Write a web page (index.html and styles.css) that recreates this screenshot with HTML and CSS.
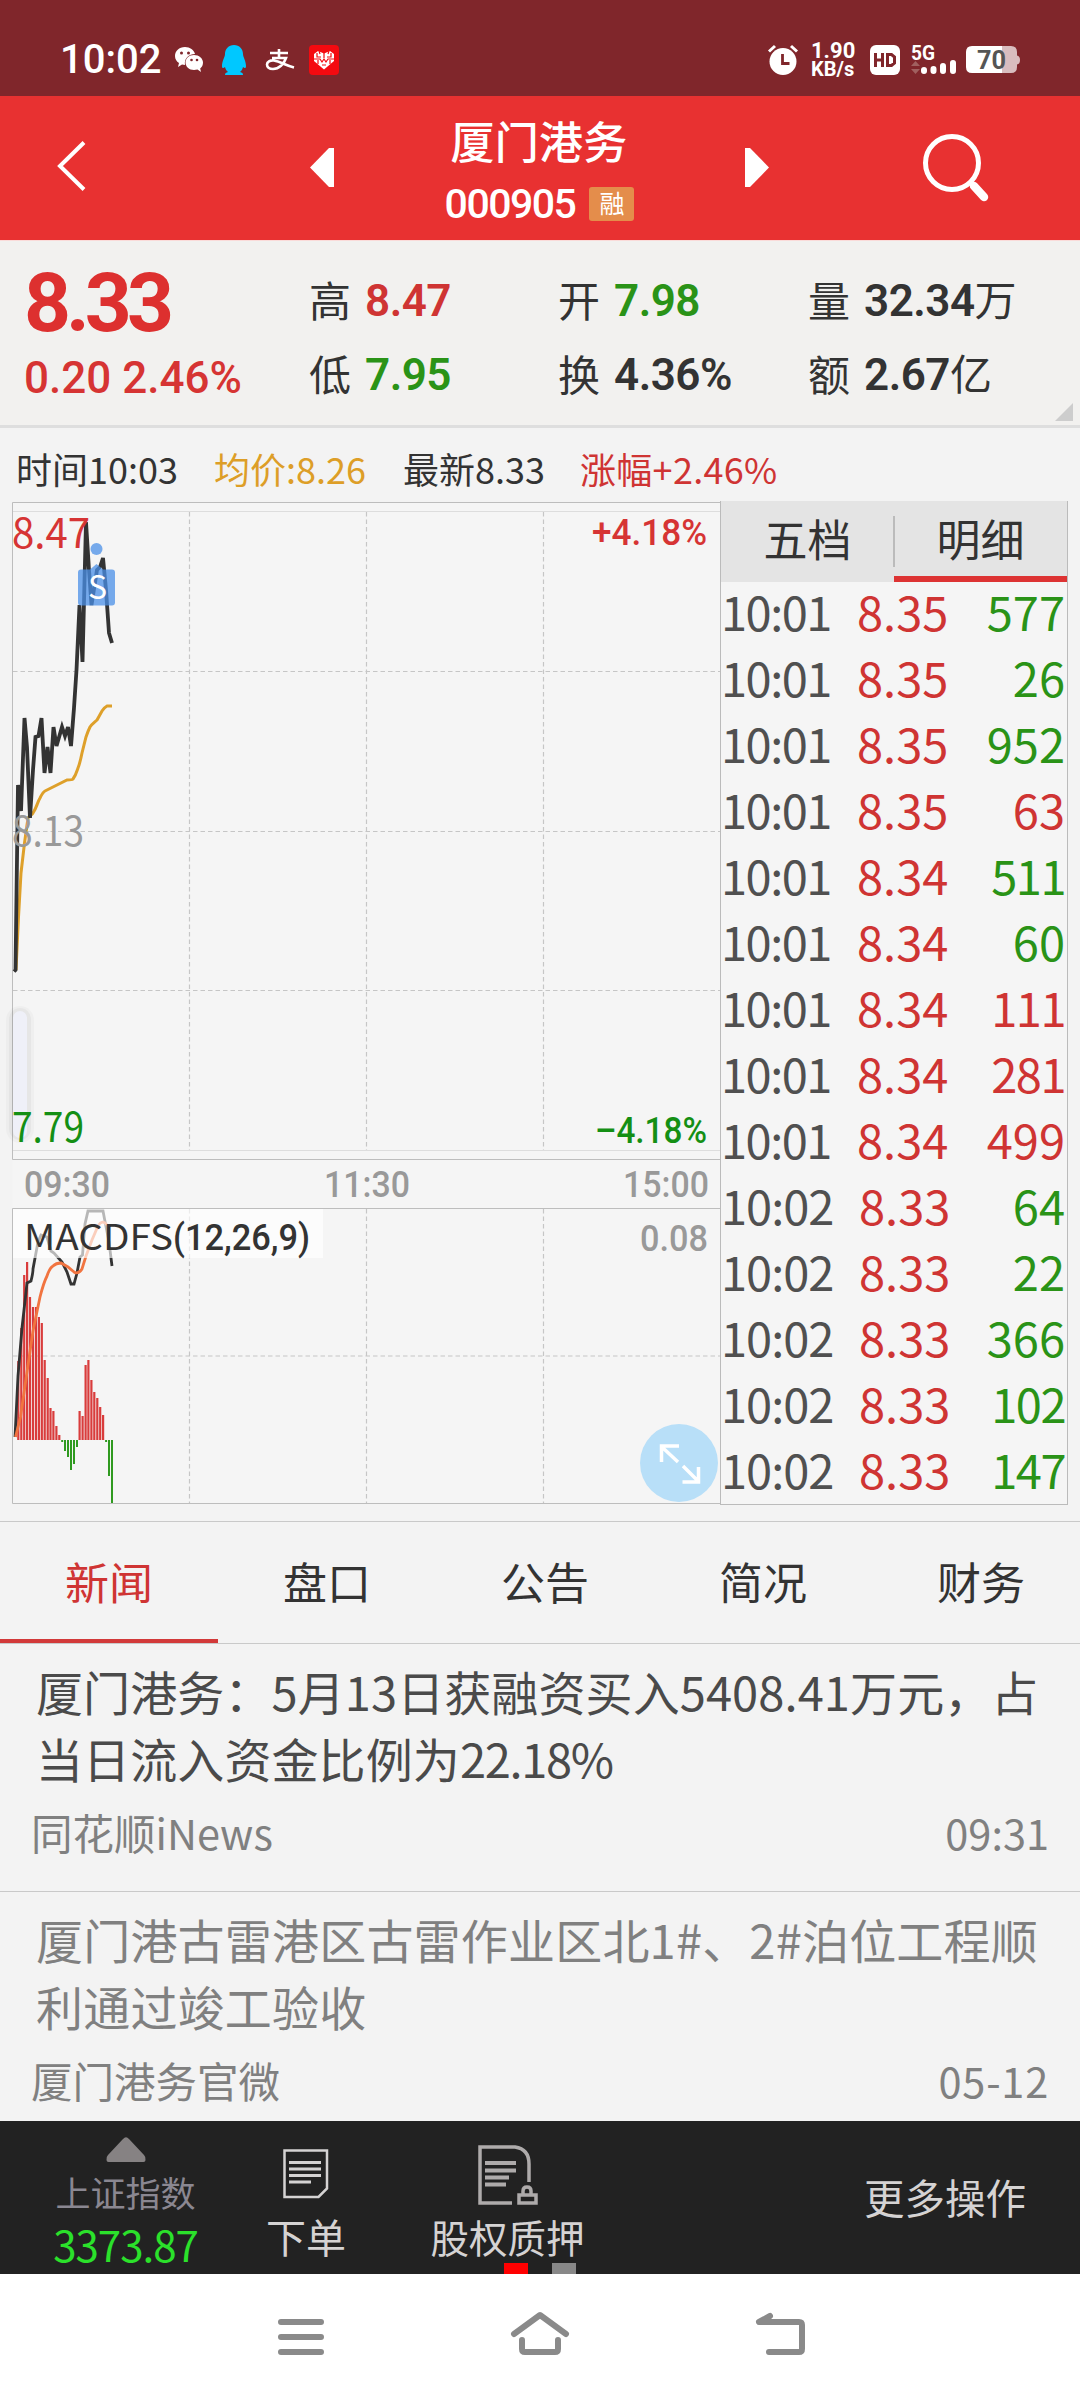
FILE: index.html
```html
<!DOCTYPE html>
<html lang="zh-CN">

<head>
	<meta charset="utf-8">
	<meta name="viewport" content="width=device-width, initial-scale=1.0">
	<title>厦门港务 000905</title>
	<link rel="stylesheet" href="styles.css">
</head>

<body>
	<div class="statusbar">
		<div class="status-left">
			<span class="clock">10:02</span>
			<svg class="ic-wechat" width="28" height="26" viewBox="0 0 28 26">
				<path fill="#fff" d="M10 0C4 0 0 4 0 9c0 3 1.500 5.500 4 7l-1 4 4-2.500 3 .5C9 11 14 7 20 7 19 3 15 0 10 0z" />
				<path fill="#fff" d="M19 8c-5 0-8.500 3.500-8.500 7.500S14 23 19 23l3.500-.5L26 25l-.8-3.500C27 20 28 18 28 15.500 28 11.500 24 8 19 8z" />
				<circle cx="6.500" cy="6" r="1.500" fill="#80262b" />
				<circle cx="13.500" cy="6" r="1.500" fill="#80262b" />
				<circle cx="16.500" cy="13" r="1.300" fill="#80262b" />
				<circle cx="22" cy="13" r="1.300" fill="#80262b" />
			</svg>
			<svg class="ic-qq" width="24" height="30" viewBox="0 0 24 30">
				<path fill="#00c8ff" d="M12 0C6.500 0 3 4 3 9c0 3-3 7-3 12 0 2 1 3 3 1 .5 2 1.500 4 3 5-2 .5-3 1-3 3h18c0-2-1-2.500-3-3 1.500-1 2.500-3 3-5 2 2 3 1 3-1 0-5-3-9-3-12 0-5-3.500-9-9-9z" />
			</svg>
			<svg class="ic-zhi" width="29" height="22" viewBox="0 0 29 22">
				<path fill="none" stroke="#fff" stroke-width="2.600" d="M4 4h18M13 0v9M6 9h14c-2 6-7 11-13 11-4 0-6-2-6-4.500S4 11 8 11.500c6 1 12 5 20 7" />
			</svg>
			<svg class="ic-heart" width="30" height="30" viewBox="0 0 30 30">
				<rect width="30" height="30" rx="4" fill="#f40a10" />
				<path fill="#fff" d="M15 24.500 5 16V9l4-3 6 2.500L21 6l4 3v7z" />
				<path fill="none" stroke="#f40a10" stroke-width="1.200" d="M15 8v5M8 8v4h4M22 8v4h-4M5 14h6l2 3 2-3 2 3 2-3h6M9 15v4M21 15v4M13 20h4M10 6l1 3M20 6l-1 3" />
			</svg>
		</div>
		<div class="status-right">
			<svg class="ic-alarm" width="30" height="30" viewBox="0 0 30 30">
				<circle cx="15" cy="16.500" r="13.500" fill="#fff" />
				<path fill="none" stroke="#fff" stroke-width="3" d="M1 6.500 7 1M29 6.500 23 1" />
				<path fill="none" stroke="#80262b" stroke-width="2.800" d="M14.500 9v9.500h7" />
			</svg>
			<div class="speed"><span>1.90</span><span>KB/s</span></div>
			<svg class="ic-hd" width="30" height="30" viewBox="0 0 30 30">
				<rect width="30" height="30" rx="6" fill="#fff" />
				<path fill="none" stroke="#80262b" stroke-width="3" d="M5.500 8v14M12.500 8v14M5.500 15h7M17.500 9.500h4l3 2.500v6l-3 2.500h-4z" />
			</svg>
			<svg class="ic-signal" width="46" height="32" viewBox="0 0 46 32">
				<text x="0" y="16" class="net" textLength="24" lengthAdjust="spacingAndGlyphs">5G</text>
				<path fill="#a0605f" d="M0 22l4.500-5 4.500 5zM0 25h9l-4.500 5z" />
				<path stroke="#fff" stroke-width="6" stroke-linecap="round" d="M13 26v1M22.500 25v2M32 22v5M42 19v8" />
			</svg>
			<svg class="ic-battery" width="54" height="28" viewBox="0 0 54 28">
				<path fill="#d9bdbf" d="M34 0h11q6 0 6 6v3.500q3 .5 3 4.500t-3 4.500V21q0 6-6 6H34z" />
				<path fill="#fff" d="M36 0H6Q0 0 0 6v15q0 6 6 6h30z" />
				<text x="11" y="22.500" class="level" textLength="29" lengthAdjust="spacingAndGlyphs">70</text>
			</svg>
		</div>
	</div>

	<header class="topbar">
		<svg class="back" width="30" height="50" viewBox="0 0 30 50"><path fill="none" stroke="#fff" stroke-width="4" d="M27 1.500 3 25l24 23.500" /></svg>
		<svg class="prev" width="24" height="39" viewBox="0 0 24 39"><path fill="#fff" d="M24 0h-5L0 19.500 19 39h5z" /></svg>
		<div class="stock">
			<h1>厦门港务</h1>
			<div class="code"><span>000905</span><em>融</em></div>
		</div>
		<svg class="next" width="24" height="39" viewBox="0 0 24 39"><path fill="#fff" d="M0 0h5l19 19.500L5 39H0z" /></svg>
		<svg class="search" width="68" height="70" viewBox="0 0 68 70">
			<circle cx="29" cy="30" r="26.500" fill="none" stroke="#fff" stroke-width="5" />
			<path stroke="#fff" stroke-width="5" d="M46 48l6 6" />
			<path stroke="#fff" stroke-width="8.500" stroke-linecap="round" d="M51 53l10 11" />
		</svg>
	</header>

	<section class="quote">
		<div class="now">
			<div class="price">8.33</div>
			<div class="change">0.20 2.46%</div>
		</div>
		<div class="cell"><label>高</label><b class="up">8.47</b></div>
		<div class="cell"><label>开</label><b class="down">7.98</b></div>
		<div class="cell"><label>量</label><b>32.34<i>万</i></b></div>
		<div class="cell"><label>低</label><b class="down">7.95</b></div>
		<div class="cell"><label>换</label><b>4.36%</b></div>
		<div class="cell"><label>额</label><b>2.67<i>亿</i></b></div>
		<svg class="corner" width="18" height="18" viewBox="0 0 18 18"><path fill="#cdcdcd" d="M18 0v18H0z" /></svg>
	</section>

	<div class="info">
		<span class="t1">时间10:03</span>
		<span class="t2 avg">均价:8.26</span>
		<span class="t3">最新8.33</span>
		<span class="t4 up">涨幅+2.46%</span>
	</div>

	<main class="market">
		<!-- y axis of the viewBox starts at 501, the top of the market block -->
		<svg class="chart" width="720" height="1004" viewBox="0 501 720 1004">
			<rect x="12.500" y="502.500" width="708" height="1001" fill="#f5f5f5" />

			<!-- grid -->
			<path class="frame" d="M720 502.500H12.500V1159.500H720M720 1208.500H12.500V1503.500H720" />
			<path class="frame thin" d="M13 511.500H720M13 1150.500H720" />
			<path class="dash" d="M13 671.500H720M13 831.500H720M13 990.500H720M13 1356H720" />
			<path class="dash" d="M189.500 512V1150M366.500 512V1150M543.500 512V1150M189.500 1209V1503M366.500 1209V1503M543.500 1209V1503" />

			<!-- average and price -->
			<path class="line-avg" d="M16 970 18.500 917 21 873 24.500 843 28 818C30 815 32 815 33 813 37 807 37 803 40 798 42 794 43 792 45 791L67 780C70 780 72 780 73 779 76 775 77 771 78 768 80 763 81 758 82 753L86 737C88 731 89 729 90 727 92 724 95 722 97 720L102 711C104 708 105 707 107 706H112" />
			<path class="line-price" d="M14 971.500 15.500 970 18 785 21 811 24.500 718 27 747 30 818 33 770 35.500 737 38.500 736 41.500 718 44.500 773 47.500 747 50.500 773 53.500 727 56.500 746 62 727 65 736 68 727 71 746 74 708 76.500 670 79.500 605 82.500 662 86 522 89 570 91.500 605 97 570 100 567 103 558 106 590 109 633 112 643" />

			<!-- sell mark -->
			<g fill="#4a8fe7" fill-opacity=".75">
				<circle cx="96.500" cy="549" r="6" />
				<path d="M81 569.500h9l6.500-5.500 6.500 5.500h9q3 0 3 3v30q0 3-3 3H81q-3 0-3-3v-30q0-3 3-3z" />
			</g>
			<text x="88" y="598.500" class="mark">S</text>

			<!-- floating side handle -->
			<rect x="6" y="1006" width="28" height="137" rx="14" fill="#000" fill-opacity=".025" />
			<rect x="9" y="1008" width="22" height="132" rx="11" fill="#000" fill-opacity=".035" />
			<rect x="13" y="1011" width="14" height="127" rx="7" fill="#eff0f8" />

			<text x="12" y="548" class="num red" textLength="78" lengthAdjust="spacingAndGlyphs">8.47</text>
			<text x="12" y="845.500" class="num grey" textLength="72" lengthAdjust="spacingAndGlyphs">8.13</text>
			<text x="12" y="1142" class="num green" textLength="72" lengthAdjust="spacingAndGlyphs">7.79</text>
			<text x="592" y="545" class="din red" textLength="115" lengthAdjust="spacingAndGlyphs">+4.18%</text>
			<text x="595" y="1142.500" class="din green" textLength="112" lengthAdjust="spacingAndGlyphs">–4.18%</text>
			<text x="24" y="1196.500" class="din grey" textLength="86" lengthAdjust="spacingAndGlyphs">09:30</text>
			<text x="324" y="1196.500" class="din grey" textLength="86" lengthAdjust="spacingAndGlyphs">11:30</text>
			<text x="623" y="1196.500" class="din grey" textLength="86" lengthAdjust="spacingAndGlyphs">15:00</text>
			<text x="640" y="1250.500" class="din grey" textLength="68" lengthAdjust="spacingAndGlyphs">0.08</text>

			<!-- macd -->
			<path class="bar-up" d="M18.300 1440V1361M21.300 1440V1328M24.200 1440V1275M27.100 1440V1262M30 1440V1297M33 1440V1307M36 1440V1307M38.900 1440V1317M41.800 1440V1323M44.700 1440V1360M47.700 1440V1378M50.500 1440V1408M53.400 1440V1411M56.400 1440V1426M59.300 1440V1435M79.600 1440V1411M82.600 1440V1416M85.600 1440V1365M88.400 1440V1360M91.400 1440V1380M94.300 1440V1392M97.300 1440V1398M100.200 1440V1407M103.100 1440V1415" />
			<path class="bar-down" d="M62.200 1440V1442M65 1440V1451M68 1440V1457M71 1440V1470M74 1440V1464M77 1440V1447M106.100 1440V1442M109 1440V1476M112 1440V1503" />
			<path class="line-dif" d="M15 1437 18 1376 22 1328 27 1283 31 1281C32 1277 33 1272 33 1269L38 1242 41 1235 47 1237 51 1251 54 1253 62 1262 67 1272 71 1284 74 1284 77 1273 80 1257 82.500 1255 85 1224 88 1211H103L105.500 1224 109 1242 112 1266" />
			<path class="line-dea" d="M15.500 1437 20.500 1417 27 1372 33 1331 40 1297C42 1289 44 1282 47 1276 49 1270 51 1267 53 1266 56 1263 59 1263 61 1263L68 1267 74 1272C77 1274 80 1272 82 1269L86 1256 92 1240 98 1226C101 1221 104 1221 107 1225" />
			<rect x="13" y="1209" width="310" height="49" fill="#fff" fill-opacity=".65" />
			<text x="24" y="1250" class="macd" textLength="149" lengthAdjust="spacingAndGlyphs">MACDFS</text>
			<text x="173" y="1249.500" class="din dark" textLength="137" lengthAdjust="spacingAndGlyphs">(12,26,9)</text>

			<!-- full screen button -->
			<circle cx="679" cy="1463" r="39" fill="#b8dff8" />
			<path fill="none" stroke="#fff" stroke-width="3.500" d="M661.500 1462V1446H679M663 1448l15 14M682.500 1482H698.500V1467M697 1480l-14-14" />
		</svg>

		<div class="ticks">
			<div class="tick-tabs">
				<span>五档</span>
				<span class="on">明细</span>
			</div>
			<ul>
				<li><time>10:01</time><span class="up">8.35</span><span class="down">577</span></li>
				<li><time>10:01</time><span class="up">8.35</span><span class="down">26</span></li>
				<li><time>10:01</time><span class="up">8.35</span><span class="down">952</span></li>
				<li><time>10:01</time><span class="up">8.35</span><span class="up">63</span></li>
				<li><time>10:01</time><span class="up">8.34</span><span class="down narrow">511</span></li>
				<li><time>10:01</time><span class="up">8.34</span><span class="down">60</span></li>
				<li><time>10:01</time><span class="up">8.34</span><span class="up narrow">111</span></li>
				<li><time>10:01</time><span class="up">8.34</span><span class="up narrow">281</span></li>
				<li><time>10:01</time><span class="up">8.34</span><span class="up">499</span></li>
				<li class="wide"><time>10:02</time><span class="up">8.33</span><span class="down">64</span></li>
				<li class="wide"><time>10:02</time><span class="up">8.33</span><span class="down">22</span></li>
				<li class="wide"><time>10:02</time><span class="up">8.33</span><span class="down">366</span></li>
				<li class="wide"><time>10:02</time><span class="up">8.33</span><span class="down narrow">102</span></li>
				<li class="wide"><time>10:02</time><span class="up">8.33</span><span class="down narrow">147</span></li>
			</ul>
		</div>
	</main>

	<nav class="tabs">
		<a class="on">新闻</a>
		<a>盘口</a>
		<a>公告</a>
		<a>简况</a>
		<a>财务</a>
	</nav>

	<article class="news">
		<h2>厦门港务：5月13日获融资买入5408.41万元，占<br>当日流入资金比例为<span>22.18%</span></h2>
		<p><span>同花顺iNews</span><time>09:31</time></p>
	</article>
	<article class="news read">
		<h2>厦门港古雷港区古雷作业区北1#、2#泊位工程顺<br>利通过竣工验收</h2>
		<p><span>厦门港务官微</span><time>05-12</time></p>
	</article>

	<footer class="toolbar">
		<div class="index">
			<svg width="40" height="25" viewBox="0 0 40 25"><path fill="#868283" d="M17 2q3-3.500 6 0l15 16q2 2 1.500 5 0 2-2 2h-35q-2 0-2-2-.5-3 1.500-5z" /></svg>
			<span>上证指数</span>
			<b>3373.87</b>
		</div>
		<div class="order">
			<svg width="46" height="50" viewBox="0 0 46 50">
				<path fill="none" stroke="#d5d3d3" stroke-width="2.500" d="M1.500 1.500h42.500v38l-8.500 8.500h-34z" />
				<path stroke="#d5d3d3" stroke-width="3" d="M6 13.500h32M6 20h32M6 26.500h32M6 33h22" />
			</svg>
			<span>下单</span>
		</div>
		<div class="pledge">
			<svg width="60" height="60" viewBox="0 0 60 60">
				<path fill="none" stroke="#aeabab" stroke-width="3.500" d="M34 58H2V2h35q14 2 14 17v18" />
				<path stroke="#aeabab" stroke-width="4" d="M7 18h31M7 25.500h31M7 32.500h24M7 39.500h21" />
				<path fill="none" stroke="#aeabab" stroke-width="3.500" d="M41 50h17v8H41zM45 49v-3q0-4 4-4t4 4v3" />
			</svg>
			<span>股权质押</span>
		</div>
		<div class="more">更多操作</div>
		<div class="pager"><i class="on"></i><i></i></div>
	</footer>

	<div class="navbar">
		<svg width="46" height="44" viewBox="0 0 46 44"><path stroke="#8a8a8a" stroke-width="6" stroke-linecap="round" d="M3 10h40M3 25h40M3 40h40" /></svg>
		<svg width="58" height="44" viewBox="0 0 58 44"><path fill="none" stroke="#8a8a8a" stroke-width="6" stroke-linecap="round" stroke-linejoin="round" d="M3 22 29 3l26 19M11 28v9q0 3 3 3h30q3 0 3-3v-9" /></svg>
		<svg width="50" height="44" viewBox="0 0 50 44"><path fill="none" stroke="#8a8a8a" stroke-width="6" stroke-linecap="round" stroke-linejoin="round" d="M14 4 3 10h40q3 0 3 3v24q0 3-3 3H13" /></svg>
	</div>
</body>

</html>
```
FILE: styles.css
```css
* {
	box-sizing: border-box;
}

body {
	margin: 0;
	width: 1080px;
	height: 2400px;
	overflow: hidden;
	background: #f3f3f3;
	color: #333;
	font-family: "Noto Sans CJK SC", "Noto Sans", sans-serif;
}

h1, h2, p, ul {
	margin: 0;
	padding: 0;
	font-weight: normal;
}

svg {
	display: block;
	flex: none;
	overflow: visible;
}

i, em {
	font-style: normal;
}

.up {
	color: #cf3433;
}

.down {
	color: #2a9317;
}

/* status bar */

.statusbar {
	display: flex;
	justify-content: space-between;
	height: 96px;
	padding: 23px 60px 0 60px;
	background: #80262b;
	color: #fff;
}

.status-left,
.status-right {
	display: flex;
	align-items: center;
	height: 74px;
}

.clock {
	width: 115px;
	font: 500 40px/72px Roboto, sans-serif;
	white-space: nowrap;
}

.ic-qq {
	margin-left: 19px;
}

.ic-zhi {
	margin-left: 20px;
}

.ic-heart {
	margin-left: 14px;
}

.speed {
	width: 46px;
	margin: 0 13px;
	font: 700 22px/19px Roboto, sans-serif;
}

.speed span {
	display: block;
}

.speed span:last-child {
	font-size: 20px;
}

.ic-signal {
	margin: 0 9px 0 11px;
}

.net {
	fill: #fff;
	font: 700 20px Roboto, sans-serif;
}

.level {
	fill: #555;
	font: 700 25px Roboto, sans-serif;
}

/* red header */

.topbar {
	display: flex;
	height: 144px;
	padding-left: 57px;
	background: #e83131;
	color: #fff;
}

.back {
	margin-top: 45px;
}

.prev {
	margin: 52px 0 0 223px;
}

.stock {
	width: 411px;
	text-align: center;
}

.stock h1 {
	padding: 18px 1px 0 0;
	font-size: 44px;
	font-weight: 500;
	line-height: 52px;
	letter-spacing: .3px;
}

.code {
	display: flex;
	justify-content: center;
	align-items: center;
	gap: 14px;
	margin-top: 20px;
	height: 36px;
}

.code span {
	font: 500 41px/38px Roboto, sans-serif;
	letter-spacing: -1.500px;
}

.code em {
	width: 45px;
	height: 34px;
	border-radius: 3px;
	background: #e48d4b;
	font-size: 25px;
	line-height: 31px;
}

.next {
	margin-top: 52px;
}

.search {
	margin: 37px 0 0 154px;
}

/* quote panel */

.quote {
	position: relative;
	display: grid;
	grid-template-columns: 309px 249px 250px 1fr;
	grid-template-rows: 74px 74px;
	height: 188px;
	padding-top: 23px;
	border-top: 1px solid #fadbd9;
	border-bottom: 3px solid #dedede;
	background: #f2f1ef;
}

.now {
	grid-row: 1 / span 2;
	padding-left: 24px;
	color: #d63433;
	font-family: Roboto, sans-serif;
	white-space: nowrap;
}

.price {
	color: #dd302f;
	font-size: 82px;
	font-weight: 700;
	line-height: 78px;
	letter-spacing: -5px;
}

.change {
	font-size: 44px;
	font-weight: 500;
	line-height: 72px;
}

.cell {
	display: flex;
	align-items: center;
	white-space: nowrap;
}

.cell label {
	width: 56px;
	margin-top: -5px;
	font-size: 42px;
	line-height: 60px;
}

.cell b {
	font: 600 44px/60px Roboto, "Noto Sans CJK SC", sans-serif;
	letter-spacing: -.5px;
}

.cell i {
	font: 400 42px/0 "Noto Sans CJK SC", sans-serif;
}

.corner {
	position: absolute;
	right: 7px;
	bottom: 4px;
}

/* line above the chart */

.info {
	display: flex;
	height: 73px;
	padding-left: 16px;
	font-size: 36px;
	line-height: 80px;
	white-space: nowrap;
}

.t1 {
	width: 198px;
}

.t2 {
	width: 189px;
}

.t3 {
	width: 177px;
}

.t4 {
	letter-spacing: .3px;
}

.avg {
	color: #dd9e27;
}

/* chart and ticks */

.market {
	display: flex;
	height: 1004px;
}

.frame {
	fill: none;
	stroke: #bdbdbd;
	stroke-width: 1;
}

.thin {
	stroke: #ddd;
}

.dash {
	fill: none;
	stroke: #c6c6c6;
	stroke-width: 1.200;
	stroke-dasharray: 4.500 3;
}

.line-price,
.line-dif,
.line-avg,
.line-dea {
	fill: none;
	stroke: #333;
	stroke-width: 3.800;
}

.line-dif {
	stroke-width: 2.800;
}

.line-avg {
	stroke: #dea02a;
	stroke-width: 3;
}

.line-dea {
	stroke: #f17440;
	stroke-width: 2.800;
}

.bar-up {
	stroke: #d93c3c;
	stroke-width: 2.200;
}

.bar-down {
	stroke: #2f9a20;
	stroke-width: 2;
}

.num {
	font: 400 41px "Noto Sans CJK SC", sans-serif;
}

.din {
	font: 500 36px Roboto, sans-serif;
}

.macd {
	fill: #333;
	font: 400 36px "Noto Sans CJK SC", sans-serif;
}

.mark {
	fill: #fff;
	font: 400 32px "Noto Sans CJK SC", sans-serif;
}

.red {
	fill: #d63434;
}

.green {
	fill: #148f14;
}

.grey {
	fill: #999;
}

.dark {
	fill: #333;
}

.ticks {
	width: 348px;
	border: 1px solid #bbb;
	border-top: none;
	background: #f5f5f5;
}

.tick-tabs {
	display: flex;
	height: 81px;
	background: #e4e4e4;
}

.tick-tabs span {
	position: relative;
	width: 50%;
	text-align: center;
	font-size: 44px;
	line-height: 74px;
}

.tick-tabs .on {
	border-bottom: 6px solid #dd3333;
}

.tick-tabs .on::before {
	content: "";
	position: absolute;
	left: -1px;
	top: 15px;
	width: 2px;
	height: 51px;
	background: #bbb;
}

.ticks ul {
	list-style: none;
}

.ticks li {
	display: flex;
	height: 66px;
	padding-right: 2px;
	font-size: 47px;
	line-height: 58px;
}

.ticks time {
	width: 136px;
	color: #505050;
	letter-spacing: -1.500px;
}

.ticks .wide time {
	width: 138px;
	letter-spacing: -1px;
}

.ticks li span:last-child {
	flex: 1;
	text-align: right;
}

.ticks li .narrow {
	letter-spacing: -1.500px;
}

/* tabs */

.tabs {
	display: flex;
	height: 123px;
	margin-top: 16px;
	border-top: 1px solid #c9c9c9;
	border-bottom: 1px solid #c9c9c9;
}

.tabs a {
	flex: none;
	width: 218px;
	height: 122px;
	text-align: center;
	font-size: 44px;
	line-height: 118px;
}

.tabs .on {
	height: 121px;
	border-bottom: 4px solid #d23939;
	color: #cf3433;
}

/* news */

.news {
	height: 248px;
	padding: 13px 31px 0 31px;
	border-bottom: 1px solid #c9c9c9;
}

.news h2 {
	padding-left: 5px;
	color: #4a4a4a;
	font-size: 47px;
	line-height: 67px;
	letter-spacing: .1px;
	white-space: nowrap;
}

.news h2 span {
	letter-spacing: -1.300px;
}

.news p {
	display: flex;
	justify-content: space-between;
	margin-top: 11px;
	color: #808080;
	font-size: 41.500px;
	line-height: 60px;
}

.read {
	height: 229px;
	border: none;
}

.read h2 {
	color: #808080;
	letter-spacing: .2px;
}

.read time {
	letter-spacing: .8px;
}

/* bottom toolbar */

.toolbar {
	position: relative;
	display: flex;
	height: 153px;
	background: #222;
	color: #d5d3d3;
	white-space: nowrap;
}

.index,
.order,
.pledge {
	display: flex;
	flex-direction: column;
	align-items: center;
	line-height: 50px;
}

.index {
	width: 251px;
	padding-top: 16px;
	color: #8a8791;
	font-size: 35px;
}

.index span {
	margin-top: 5px;
}

.index b {
	color: #2be12b;
	font-size: 42px;
	font-weight: 400;
	line-height: 53px;
	letter-spacing: -1px;
}

.order {
	width: 110px;
	padding-top: 28px;
	font-size: 40px;
}

.order span {
	margin-top: 12px;
}

.pledge {
	width: 293px;
	padding-top: 24px;
	font-size: 38.500px;
}

.pledge span {
	margin-top: 6px;
}

.more {
	margin-left: 210px;
	font-size: 40.500px;
	line-height: 152px;
}

.pager {
	position: absolute;
	left: 504px;
	bottom: 0;
	display: flex;
	gap: 24px;
}

.pager i {
	width: 24px;
	height: 11px;
	background: #888;
}

.pager .on {
	background: #f00;
}

/* system navigation */

.navbar {
	display: flex;
	justify-content: center;
	height: 126px;
	padding: 38px 0 0 3px;
	gap: 187px;
	background: #fff;
}
```
